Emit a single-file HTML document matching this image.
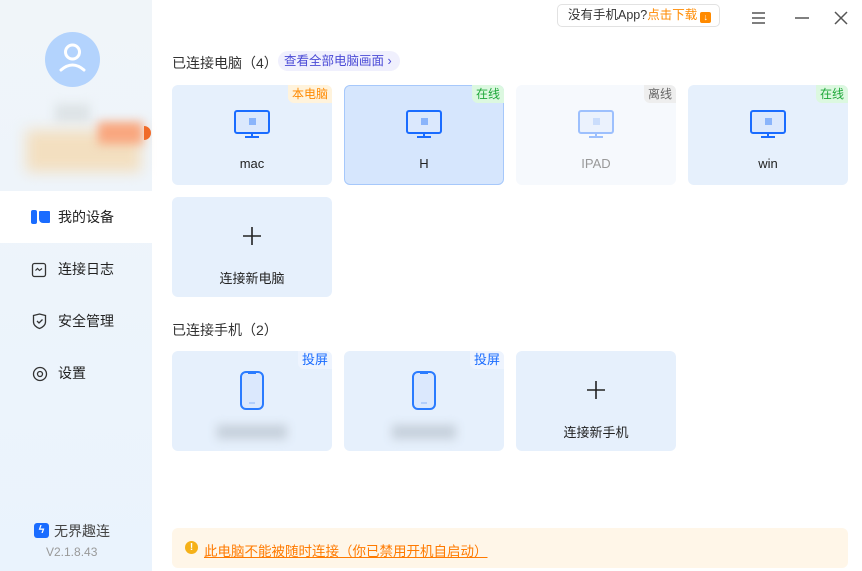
<!DOCTYPE html>
<html><head><meta charset="utf-8"><style>
*{margin:0;padding:0;box-sizing:border-box}
body{width:862px;height:571px;overflow:hidden;background:#fff;font-family:"Liberation Sans","Noto Sans CJK SC",sans-serif;position:relative;color:#222}
.side{position:absolute;left:0;top:0;width:152px;height:571px;background:linear-gradient(#f0f5f9,#eaf3fd)}
.abs{position:absolute}
.nav{position:absolute;left:0;width:152px;height:52px;font-size:14px;color:#222;display:flex;align-items:center;padding-left:58px}
.card{position:absolute;width:160px;height:100px;background:#e6f0fc;border-radius:6px;font-size:13px;text-align:center}
.tag{position:absolute;right:0;top:0;font-size:12px;padding:1px 4px;border-radius:0 6px 0 6px;line-height:16px}
.nm{position:absolute;left:0;right:0;top:71px;font-size:13px}
.ic{position:absolute;left:62px;top:25px}
h3{position:absolute;font-weight:normal;font-size:14px;color:#333}
</style></head><body>
<div class="side">
 <div class="abs" style="left:45px;top:32px;width:55px;height:55px;border-radius:50%;background:#b3d3fd">
  <svg width="55" height="55" viewBox="0 0 55 55"><circle cx="27.5" cy="20" r="7" fill="none" stroke="#fff" stroke-width="3"/><path d="M16 38 Q27.5 28 39 38" fill="none" stroke="#fff" stroke-width="3" stroke-linecap="round"/></svg>
 </div>
 <div class="abs" style="left:55px;top:104px;width:35px;height:18px;background:#dde3e6;filter:blur(5px)"></div>
 <div class="abs" style="left:26px;top:130px;width:115px;height:42px;background:#f3dfc0;filter:blur(7px)"></div>
 <div class="abs" style="left:98px;top:122px;width:45px;height:22px;background:#f9a67e;filter:blur(5px)"></div>
 <div class="abs" style="left:144px;top:126px;width:7px;height:14px;background:#f06a28;border-radius:0 7px 7px 0"></div>
 <div class="nav" style="top:191px;background:#fff">我的设备</div>
 <div class="abs" style="left:31px;top:210px;width:6px;height:14px;background:#1a6cff;border-radius:2px"></div>
 <div class="abs" style="left:39px;top:211px;width:11px;height:12px;background:#1a6cff;border-radius:1px 1px 1px 4px"></div>
 <div class="nav" style="top:243px">连接日志</div>
 <svg class="abs" style="left:31px;top:262px" width="16" height="16"><rect x="1.5" y="1.5" width="13" height="13" rx="2" fill="none" stroke="#333" stroke-width="1.3"/><path d="M4.5 8.5l2-2 2 2 2.5-2" fill="none" stroke="#333" stroke-width="1.2"/></svg>
 <div class="nav" style="top:295px">安全管理</div>
 <svg class="abs" style="left:32px;top:313px" width="16" height="17"><path d="M1.5 2.5L7.5 1l6 1.5V9c0 3-3 5.5-6 6.5C4.5 14.5 1.5 12 1.5 9z" fill="none" stroke="#333" stroke-width="1.3"/><path d="M5 8l2 2 3.5-3.5" fill="none" stroke="#333" stroke-width="1.3"/></svg>
 <div class="nav" style="top:347px">设置</div>
 <svg class="abs" style="left:32px;top:366px" width="16" height="16"><circle cx="8" cy="8" r="6.5" fill="none" stroke="#333" stroke-width="1.3"/><circle cx="8" cy="8" r="2.5" fill="none" stroke="#333" stroke-width="1.3"/></svg>
 <div class="abs" style="left:34px;top:523px;width:15px;height:15px;border-radius:3px;background:#1a6cff;color:#fff;font-size:11px;line-height:15px;text-align:center;font-weight:bold">ϟ</div>
 <div class="abs" style="left:54px;top:521px;font-size:14px;color:#444">无界趣连</div>
 <div class="abs" style="left:46px;top:545px;font-size:12px;color:#999">V2.1.8.43</div>
</div>

<div class="abs" style="left:557px;top:4px;width:163px;height:23px;border:1px solid #e2e2e2;border-radius:5px;font-size:12.5px;line-height:21px;padding-left:10px;color:#333">没有手机App?<span style="color:#ff8a00">点击下载</span><span style="display:inline-block;width:11px;height:11px;background:#ff8a00;border-radius:2px;margin-left:3px;vertical-align:-1px;color:#fff;font-size:9px;line-height:11px;text-align:center">↓</span></div>
<svg class="abs" style="left:750px;top:10px" width="100" height="16"><path d="M2 3h13M2 8h13M2 13h13" stroke="#555" stroke-width="1.5"/><path d="M45 8h14" stroke="#555" stroke-width="1.5"/><path d="M85 2l12 12M97 2L85 14" stroke="#555" stroke-width="1.5"/></svg>

<h3 style="left:172px;top:53px">已连接电脑（4）</h3>
<div class="abs" style="left:278px;top:51px;height:20px;padding:0 8px 0 6px;border-radius:10px;background:#f0f0fd;color:#4a4ad6;font-size:12.5px;line-height:20px">查看全部电脑画面 ›</div>

<div class="card" style="left:172px;top:85px"><div class="tag" style="background:#fff3dc;color:#ff8a00">本电脑</div><svg class="ic" width="36" height="30"><rect x="1" y="1" width="34" height="22" rx="2" fill="#dbe8fd" stroke="#1a6cff" stroke-width="2"/><rect x="15" y="8" width="7" height="7" fill="#8ab4fb"/><path d="M18 23v3M11 27h14" stroke="#1a6cff" stroke-width="2"/></svg><div class="nm">mac</div></div>
<div class="card" style="left:344px;top:85px;background:#d6e6fd;border:1px solid #a6c8fb"><div class="tag" style="background:#dcf8e0;color:#1fa83a;top:-1px;right:-1px">在线</div><svg class="ic" style="left:61px;top:24px" width="36" height="30"><rect x="1" y="1" width="34" height="22" rx="2" fill="#dbe8fd" stroke="#1a6cff" stroke-width="2"/><rect x="15" y="8" width="7" height="7" fill="#8ab4fb"/><path d="M18 23v3M11 27h14" stroke="#1a6cff" stroke-width="2"/></svg><div class="nm" style="top:70px">H</div></div>
<div class="card" style="left:516px;top:85px;background:#f6f9fd"><div class="tag" style="background:#eeeeee;color:#666">离线</div><svg class="ic" width="36" height="30" opacity="0.4"><rect x="1" y="1" width="34" height="22" rx="2" fill="#dbe8fd" stroke="#1a6cff" stroke-width="2"/><rect x="15" y="8" width="7" height="7" fill="#8ab4fb"/><path d="M18 23v3M11 27h14" stroke="#1a6cff" stroke-width="2"/></svg><div class="nm" style="color:#999">IPAD</div></div>
<div class="card" style="left:688px;top:85px"><div class="tag" style="background:#dcf8e0;color:#1fa83a">在线</div><svg class="ic" width="36" height="30"><rect x="1" y="1" width="34" height="22" rx="2" fill="#dbe8fd" stroke="#1a6cff" stroke-width="2"/><rect x="15" y="8" width="7" height="7" fill="#8ab4fb"/><path d="M18 23v3M11 27h14" stroke="#1a6cff" stroke-width="2"/></svg><div class="nm">win</div></div>
<div class="card" style="left:172px;top:197px"><svg class="abs" style="left:70px;top:29px" width="20" height="20"><path d="M10 1v18M1 10h18" stroke="#222" stroke-width="1.6"/></svg><div class="nm">连接新电脑</div></div>

<h3 style="left:172px;top:320px">已连接手机（2）</h3>
<div class="card" style="left:172px;top:351px"><div class="tag" style="background:#eef4fe;color:#1a6cff;font-size:13px">投屏</div><svg class="abs" style="left:68px;top:20px" width="24" height="40"><rect x="1" y="1" width="22" height="37" rx="5" fill="#dbe8fd" stroke="#2a7bff" stroke-width="2"/><path d="M8 2h8" stroke="#2a7bff" stroke-width="2"/><path d="M9 32h6" stroke="#8ab4fb" stroke-width="1"/></svg><div class="abs" style="left:45px;top:74px;width:70px;height:14px;background:#c5cfda;filter:blur(5px)"></div></div>
<div class="card" style="left:344px;top:351px"><div class="tag" style="background:#eef4fe;color:#1a6cff;font-size:13px">投屏</div><svg class="abs" style="left:68px;top:20px" width="24" height="40"><rect x="1" y="1" width="22" height="37" rx="5" fill="#dbe8fd" stroke="#2a7bff" stroke-width="2"/><path d="M8 2h8" stroke="#2a7bff" stroke-width="2"/><path d="M9 32h6" stroke="#8ab4fb" stroke-width="1"/></svg><div class="abs" style="left:48px;top:74px;width:64px;height:14px;background:#c5cfda;filter:blur(5px)"></div></div>
<div class="card" style="left:516px;top:351px"><svg class="abs" style="left:70px;top:29px" width="20" height="20"><path d="M10 1v18M1 10h18" stroke="#222" stroke-width="1.6"/></svg><div class="nm">连接新手机</div></div>

<div class="abs" style="left:172px;top:528px;width:676px;height:40px;background:#fff6e8;border-radius:6px"></div>
<div class="abs" style="left:185px;top:541px;width:13px;height:13px;border-radius:50%;background:#f5b119;color:#fff;font-size:10px;line-height:13px;text-align:center;font-weight:bold">!</div>
<div class="abs" style="left:204px;top:540px;font-size:13.5px;color:#ff7a00;text-decoration:underline">此电脑不能被随时连接（你已禁用开机自启动）</div>
</body></html>
